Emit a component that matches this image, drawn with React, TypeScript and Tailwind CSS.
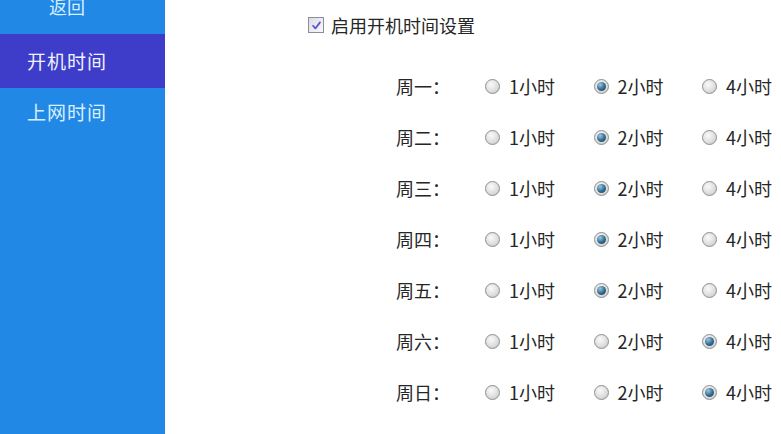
import React from "react";

const days = [
  { name: "周一：", sel: 1 },
  { name: "周二：", sel: 1 },
  { name: "周三：", sel: 1 },
  { name: "周四：", sel: 1 },
  { name: "周五：", sel: 1 },
  { name: "周六：", sel: 2 },
  { name: "周日：", sel: 2 },
];
const opts = ["1小时", "2小时", "4小时"];

function Radio({ checked }: { checked: boolean }) {
  return (
    <span className="relative inline-flex h-[15px] w-[15px] shrink-0 items-center justify-center rounded-full border border-[#8e8e8e] bg-[radial-gradient(circle_at_40%_35%,#fafafa,#dcdcdc_60%,#bdbdbd)]">
      {checked && (
        <span className="h-[9px] w-[9px] rounded-full bg-[radial-gradient(circle_at_35%_30%,#9cc8e0,#2f6a8e_55%,#173d55)]" />
      )}
    </span>
  );
}

export default function App() {
  return (
    <div
      className="flex h-[434px] w-[781px] overflow-hidden bg-white"
      style={{ fontFamily: '"Noto Sans CJK SC", "Noto Sans", sans-serif' }}
    >
      <div className="flex w-[165px] shrink-0 flex-col bg-[#2188e6]">
        <div className="-mt-[21px] flex h-[55px] items-center pl-[49px] text-[18px] text-[#d8efff]">
          返回
        </div>
        <div className="flex h-[54px] items-center bg-[#3d3dc9] pl-[27px] text-[19px] tracking-[1px] text-[#f0f0ff]">
          开机时间
        </div>
        <div className="flex h-[48px] items-center pl-[27px] text-[19px] tracking-[1px] text-[#d8efff]">
          上网时间
        </div>
      </div>
      <div className="flex flex-1 flex-col text-[18px] text-[#262626]">
        <div className="mt-[10px] flex h-[30px] items-center pl-[143px]">
          <span className="mr-[7px] flex h-[16px] w-[16px] items-center justify-center border border-[#8c8c9c] bg-[linear-gradient(135deg,#dcdce8,#f8f8fc)]">
            <svg viewBox="0 0 12 12" className="h-[11px] w-[11px]">
              <path d="M2.2 6.3 L4.8 9.2 L9.8 2.6" fill="none" stroke="#5a55c4" strokeWidth="1.9" strokeLinejoin="round" strokeLinecap="round" />
            </svg>
          </span>
          <span>启用开机时间设置</span>
        </div>
        <div className="mt-[21px] flex flex-col">
          {days.map((d) => (
            <div key={d.name} className="flex h-[51px] items-center pl-[231px]">
              <span className="w-[89px] shrink-0">{d.name}</span>
              {opts.map((o, i) => (
                <span key={o} className="flex w-[108.5px] shrink-0 items-center gap-[9px]">
                  <Radio checked={i === d.sel} />
                  <span>{o}</span>
                </span>
              ))}
            </div>
          ))}
        </div>
      </div>
    </div>
  );
}
